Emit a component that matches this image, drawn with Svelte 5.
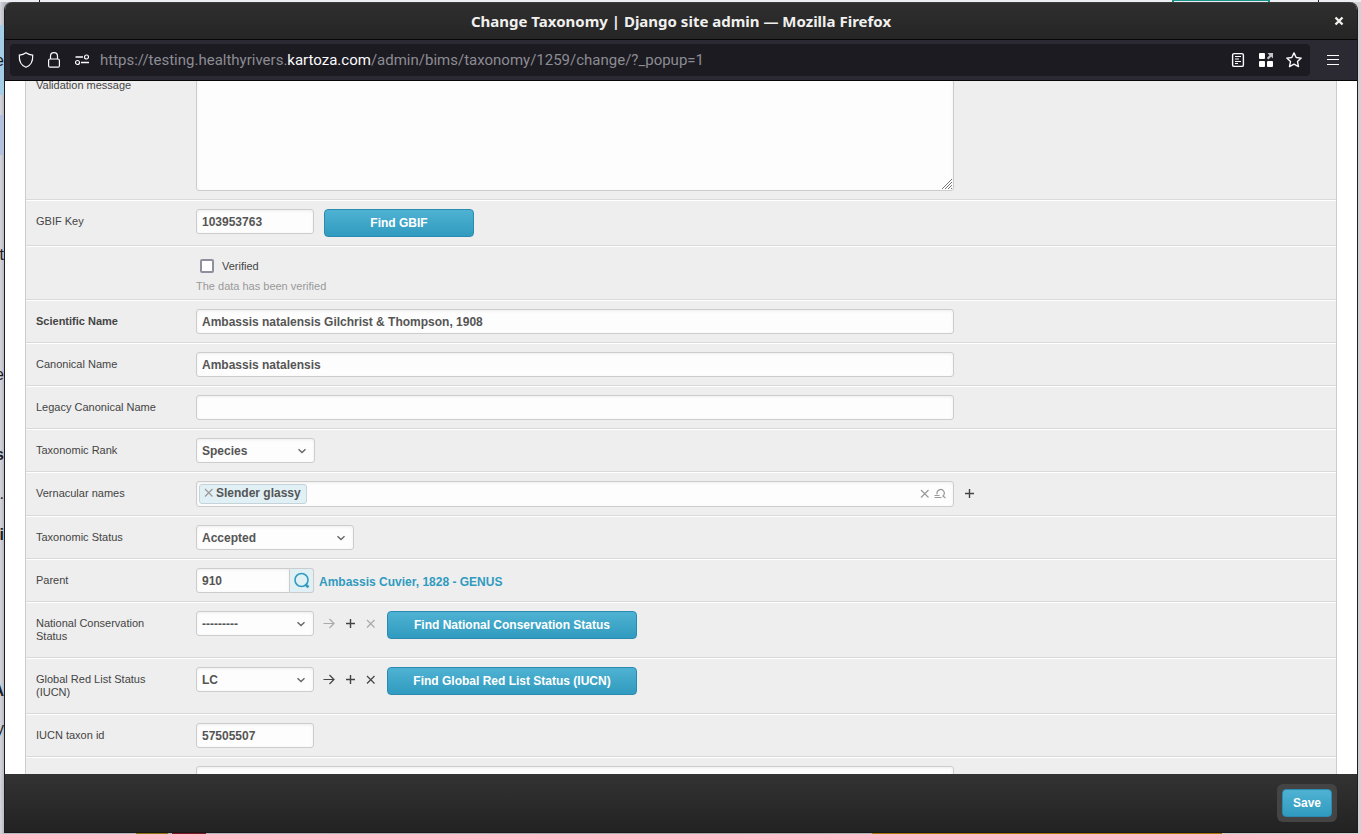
<script>
  let gbif = $state('103953763');
  let verified = $state(false);
  let scientific = $state('Ambassis natalensis Gilchrist & Thompson, 1908');
  let canonical = $state('Ambassis natalensis');
  let legacy = $state('');
  let parent = $state('910');
  let taxonId = $state('57505507');

  // Text of the page behind the popup that shows along the window's left side.
  const behind = [
    { t: 'e', y: 51 },
    { t: 't', y: 245 },
    { t: 'e', y: 365 },
    { t: 's', y: 445, b: true },
    { t: '.', y: 484 },
    { t: 'i', y: 525, b: true },
    { t: 'A', y: 681, b: true },
    { t: 'y', y: 719 }
  ];
</script>

{#snippet dropdown(id, value, width)}
  <span class="select" style="width: {width}px">
    <select {id}><option>{value}</option></select>
    <svg viewBox="0 0 10 10" width="10" height="10"><path d="M1.5 3.200 5 6.500 8.500 3.200" /></svg>
  </span>
{/snippet}

{#snippet arrow()}<svg viewBox="0 0 12 12" width="12" height="12"><path d="M.5 5.500h10.500M6.500 1 11 5.500 6.500 10" /></svg>{/snippet}
{#snippet plus()}<svg class="plus" viewBox="0 0 12 12" width="12" height="12"><path d="M6.500 1v9M2 5.500h9" /></svg>{/snippet}
{#snippet cross()}<svg viewBox="0 0 12 12" width="12" height="12"><path d="m2 2 7.500 7.500m0-7.500L2 9.500" /></svg>{/snippet}

<div class="desktop">
  <div class="patch blue"></div>
  <div class="patch lilac"></div>
  <div class="patch teal"></div>
  <div class="patch olive"></div>
  <div class="patch red"></div>
  <div class="patch gold"></div>
  <div class="patch tick start"></div>
  <div class="patch tick end"></div>
  {#each behind as g}
    <span class="glyph" class:bold={g.b} style="top: {g.y}px">{g.t}</span>
  {/each}

  <div class="window">
    <header class="titlebar">
      <h1>Change Taxonomy | Django site admin — Mozilla Firefox</h1>
      <button class="close" aria-label="Close window">
        <svg viewBox="0 0 10 10" width="10" height="10"><path d="m1.500 1.500 7 7m0-7-7 7" /></svg>
      </button>
    </header>

    <nav class="toolbar">
      <div class="urlbar">
        <button aria-label="Tracking protection">
          <svg viewBox="0 0 16 16" width="16" height="16"><path d="M8 .8c2 1.500 4.300 2.200 6.700 2.300C15 8.500 13 13.500 8 15.300 3 13.500 1 8.500 1.300 3.100 3.700 3 6 2.300 8 .8z" /></svg>
        </button>
        <button aria-label="Connection is secure">
          <svg viewBox="0 0 16 16" width="16" height="16"><path d="M4.500 7V4.200a3.500 3.500 0 0 1 7 0V7" /><rect x="2.600" y="7" width="10.800" height="8.200" rx="1.500" /></svg>
        </button>
        <button aria-label="Permissions">
          <svg viewBox="0 0 16 16" width="16" height="16"><path d="M1.500 5h7.500M7 10.500h8" stroke-width="1.400" /><circle cx="12.500" cy="5" r="2" /><circle cx="3.500" cy="10.500" r="2" /></svg>
        </button>
        <span class="url">https://testing.healthyrivers.<b>kartoza.com</b>/admin/bims/taxonomy/1259/change/?_popup=1</span>
        <button aria-label="Reader view">
          <svg viewBox="0 0 16 16" width="16" height="16"><rect x="2.600" y="1.600" width="10.800" height="12.800" rx="1.500" stroke-width="1.400" /><path d="M5 4.500h6M5 7h4M5 9.500h6M5 11.500h3" /></svg>
        </button>
        <button aria-label="Extensions">
          <svg class="tiles" viewBox="0 0 16 16" width="16" height="16"><rect x="1" y="1" width="6" height="6" rx="1" /><rect x="1" y="9" width="6" height="6" rx="1" /><rect x="9" y="9" width="6" height="6" rx="1" /><path d="M9.500 1H15v5.500l-1.800-1.800L10.400 7.500 8.800 6l2.700-2.800z" /></svg>
        </button>
        <button aria-label="Bookmark this page">
          <svg viewBox="0 0 16 16" width="16" height="16"><path d="m8 .9 2.200 4.600 5 .6-3.700 3.500 1 5L8 12.200l-4.500 2.400 1-5L.8 6.100l5-.6z" stroke-width="1.400" stroke-linejoin="round" /></svg>
        </button>
      </div>
      <button class="menu" aria-label="Open menu">
        <svg viewBox="0 0 12 12" width="12" height="12"><path d="M0 1.500h12M0 5.500h12M0 10.500h12" /></svg>
      </button>
    </nav>

    <main>
      <form onsubmit={(e) => e.preventDefault()}>
        <div class="row">
          <label for="message">Validation message</label>
          <textarea id="message"></textarea>
        </div>
        <div class="row">
          <label for="gbif">GBIF Key</label>
          <div class="field gap">
            <input id="gbif" class="short" type="text" bind:value={gbif} />
            <button type="button" class="action find">Find GBIF</button>
          </div>
        </div>
        <div class="row check-row">
          <div class="check">
            <label class="check-label"><input type="checkbox" bind:checked={verified} />Verified</label>
            <p>The data has been verified</p>
          </div>
        </div>
        <div class="row">
          <label for="scientific" class="required">Scientific Name</label>
          <input id="scientific" class="long" type="text" bind:value={scientific} />
        </div>
        <div class="row">
          <label for="canonical">Canonical Name</label>
          <input id="canonical" class="long" type="text" bind:value={canonical} />
        </div>
        <div class="row">
          <label for="legacy">Legacy Canonical Name</label>
          <input id="legacy" class="long" type="text" bind:value={legacy} />
        </div>
        <div class="row">
          <label for="rank">Taxonomic Rank</label>
          {@render dropdown('rank', 'Species', 119)}
        </div>
        <div class="row">
          <label for="vernacular">Vernacular names</label>
          <div class="field gap">
            <div class="tags">
              <span class="tag">
                <button type="button" aria-label="Remove Slender glassy">{@render cross()}</button>Slender glassy
              </span>
              <input id="vernacular" type="text" />
              <button type="button" aria-label="Clear">{@render cross()}</button>
              <button type="button" aria-label="Look up">
                <svg viewBox="0 0 12 12" width="12" height="12"><path d="M3.200 6.200A3.600 3.600 0 1 1 8.800 8M8.500 7.800l3 2.200M.5 7.500h5M.5 9.500h7" /></svg>
              </button>
            </div>
            <button type="button" class="icon" aria-label="Add vernacular name">{@render plus()}</button>
          </div>
        </div>
        <div class="row">
          <label for="status">Taxonomic Status</label>
          {@render dropdown('status', 'Accepted', 158)}
        </div>
        <div class="row">
          <label for="parent">Parent</label>
          <div class="field">
            <div class="lookup">
              <input id="parent" type="text" bind:value={parent} />
              <button type="button" aria-label="Look up parent">
                <svg viewBox="0 0 18 18" width="18" height="18"><circle cx="8.500" cy="8" r="6.500" /><path d="m12.200 12.200 3.300 3" stroke-width="2.800" /></svg>
              </button>
            </div>
            <a href="#parent">Ambassis Cuvier, 1828 - GENUS</a>
          </div>
        </div>
        <div class="row">
          <label for="national">National Conservation Status</label>
          <div class="field gap">
            {@render dropdown('national', '---------', 118)}
            <div class="tools">
              <button type="button" class="icon off" aria-label="View national status">{@render arrow()}</button>
              <button type="button" class="icon" aria-label="Add national status">{@render plus()}</button>
              <button type="button" class="icon off" aria-label="Delete national status">{@render cross()}</button>
            </div>
            <button type="button" class="action wide">Find National Conservation Status</button>
          </div>
        </div>
        <div class="row">
          <label for="iucn">Global Red List Status (IUCN)</label>
          <div class="field gap">
            {@render dropdown('iucn', 'LC', 118)}
            <div class="tools">
              <button type="button" class="icon" aria-label="View IUCN status">{@render arrow()}</button>
              <button type="button" class="icon" aria-label="Add IUCN status">{@render plus()}</button>
              <button type="button" class="icon" aria-label="Delete IUCN status">{@render cross()}</button>
            </div>
            <button type="button" class="action wide">Find Global Red List Status (IUCN)</button>
          </div>
        </div>
        <div class="row">
          <label for="taxon">IUCN taxon id</label>
          <input id="taxon" class="short" type="text" bind:value={taxonId} />
        </div>
        <div class="row">
          <label for="more"></label>
          <input id="more" class="long" type="text" />
        </div>
      </form>
    </main>

    <footer>
      <div class="save"><button type="button" class="action">Save</button></div>
    </footer>
  </div>
</div>

<style>
  :global(body) {
    margin: 0;
  }
  * {
    box-sizing: border-box;
  }
  .desktop {
    position: relative;
    display: flex;
    height: 100vh;
    padding: 2px 3px 1px 4px;
    overflow: hidden;
    background: linear-gradient(90deg, #d6d7de 0, #b9bac3 4px, #a9a9ae 50%, #d2d2d4 100%);
    font-family: 'Liberation Sans', Arial, sans-serif;
    font-size: 11px;
    color: #444;
  }
  .desktop::before {
    content: '';
    position: absolute;
    inset: 0 0 auto;
    height: 2px;
    background: #eceef1;
  }
  .patch {
    position: absolute;
  }
  .blue {
    top: 25px;
    left: 0;
    width: 4px;
    height: 70px;
    background: #a3cee6;
  }
  .lilac {
    top: 115px;
    left: 0;
    width: 4px;
    height: 40px;
    background: #b3c0de;
  }
  .teal {
    top: 0;
    right: 91px;
    width: 98px;
    height: 2px;
    border: solid #17948a;
    border-width: 1px 2px 0;
  }
  .olive,
  .red,
  .gold {
    bottom: 0;
    height: 1px;
  }
  .olive {
    left: 136px;
    width: 32px;
    background: #8a7210;
  }
  .red {
    left: 172px;
    width: 34px;
    background: #7d1522;
  }
  .gold {
    right: 139px;
    width: 350px;
    background: #a8770c;
  }
  .tick {
    top: 0;
    width: 1px;
    height: 2px;
    background: #222;
  }
  .start {
    left: 39px;
  }
  .end {
    right: 42px;
  }
  .glyph {
    position: absolute;
    left: 0;
    width: 4px;
    display: flex;
    justify-content: flex-end;
    overflow: hidden;
    font-size: 16px;
    line-height: 20px;
    color: #1c1d22;
  }
  .bold {
    font-weight: bold;
  }
  .window {
    position: relative;
    flex: 1;
    min-width: 0;
    display: flex;
    flex-direction: column;
    overflow: hidden;
    border: solid #1d1d22;
    border-width: 0 1px;
    border-radius: 8px 8px 0 0;
    background: #fff;
  }
  button {
    display: flex;
    align-items: center;
    justify-content: center;
    margin: 0;
    padding: 0;
    border: 0;
    background: none;
    color: inherit;
    font: inherit;
  }
  svg {
    flex: none;
    fill: none;
    stroke: currentColor;
    stroke-width: 1.2;
  }
  .titlebar {
    display: grid;
    grid-template-columns: 1fr auto 1fr;
    align-items: center;
    height: 38px;
    flex: none;
    border-top: 1px solid #3c3c3c;
    border-bottom: 1px solid #060606;
    background: linear-gradient(#2f2f2f, #252525);
    color: #f0f0ee;
  }
  h1 {
    grid-column: 2;
    margin: 0;
    padding-bottom: 1px;
    font: 700 15px/20px 'Noto Sans', sans-serif;
  }
  .close {
    justify-self: end;
    margin-right: 13px;
  }
  .close svg {
    stroke-width: 2.4;
  }
  .toolbar {
    display: flex;
    align-items: center;
    height: 41px;
    flex: none;
    padding: 0 18px 0 5px;
    border-bottom: 1px solid #060606;
    background: #2b2a33;
    color: #fbfbfe;
  }
  .urlbar {
    flex: 1;
    display: flex;
    align-items: center;
    gap: 12px;
    height: 32px;
    padding: 0 8px;
    border-radius: 4px;
    background: #1c1b22;
  }
  .url {
    flex: 1;
    margin-left: -2px;
    font: 15px/24px Roboto, 'Noto Sans', sans-serif;
    white-space: nowrap;
    color: #8c8c92;
  }
  .url b {
    font-weight: 400;
    color: #fbfbfe;
  }
  .tiles {
    fill: #fff;
    stroke: none;
  }
  .tiles path {
    fill: #c4c4c8;
  }
  .menu {
    margin-left: 17px;
  }
  main {
    flex: 1;
    min-height: 0;
    overflow: hidden;
    padding: 0 20px;
    background: #fff;
  }
  form {
    margin-top: -17px;
    border: solid #ccc;
    border-width: 0 1px;
    background: #eee;
  }
  .row {
    display: flex;
    align-items: flex-start;
    padding: 8px 10px;
    border-top: 1px solid #fff;
    border-bottom: 1px solid #d9d9d9;
  }
  .row > label {
    flex: none;
    width: 160px;
    padding: 6px 30px 6px 0;
    line-height: 13px;
  }
  .row > .required {
    font-weight: bold;
  }
  .field {
    display: flex;
    align-items: flex-start;
    gap: 5px;
  }
  .gap {
    gap: 10px;
  }
  input[type='text'],
  textarea,
  select {
    height: 25px;
    margin: 0;
    padding: 0 5px;
    border: 1px solid #ccc;
    border-radius: 3px;
    background: #fdfdfd;
    box-shadow: inset 0 1px 3px #eee;
    color: #555;
    font: bold 12px/15px 'Liberation Sans', Arial, sans-serif;
    outline: 0;
  }
  textarea {
    width: 758px;
    height: 118px;
  }
  textarea::-webkit-resizer {
    background: url("data:image/svg+xml,%3Csvg xmlns='http://www.w3.org/2000/svg' viewBox='0 0 15 15'%3E%3Cpath d='M4 14 14 4M7 14l7-7M10 14l4-4M13 14l1-1' stroke='%23777' fill='none'/%3E%3C/svg%3E");
  }
  input.long {
    width: 758px;
  }
  input.short {
    width: 118px;
  }
  .select {
    position: relative;
    display: block;
  }
  .select select {
    appearance: none;
    width: 100%;
    padding-top: 2px;
  }
  .select svg {
    position: absolute;
    top: 8px;
    right: 8px;
    color: #666;
    stroke-width: 1.4;
    pointer-events: none;
  }
  .action {
    height: 28px;
    padding: 0 10px;
    border: 1px solid #2b8ab0;
    border-radius: 4px;
    background: linear-gradient(#4fb2d3, #309bbf);
    color: #fff;
    font-size: 12px;
    font-weight: bold;
  }
  .find {
    width: 150px;
  }
  .wide {
    width: 250px;
  }
  .row.check-row {
    padding: 8px 10px 6px 170px;
  }
  .check-label {
    display: flex;
    align-items: center;
    gap: 8px;
    height: 22px;
  }
  .check-label input {
    appearance: none;
    width: 14px;
    height: 14px;
    margin: 0 0 0 4px;
    border: 2px solid #8f8f9d;
    border-radius: 2px;
    background: #fff;
  }
  .check-label input:checked {
    background: #309bbf;
  }
  .check p {
    margin: 3px 0 0;
    line-height: 13px;
    color: #999;
  }
  .tags {
    display: flex;
    align-items: center;
    gap: 3px;
    width: 758px;
    height: 26px;
    padding: 0 7px 0 2px;
    border: 1px solid #ccc;
    border-radius: 3px;
    background: #fdfdfd;
    box-shadow: inset 0 1px 3px #eee;
    color: #999;
  }
  .tags > input[type='text'] {
    flex: 1;
    min-width: 0;
    height: 20px;
    border: 0;
    background: none;
    box-shadow: none;
  }
  .tag {
    display: flex;
    align-items: center;
    gap: 1px;
    height: 20px;
    padding: 0 5px 2px 3px;
    border: 1px solid #c4d4da;
    border-radius: 3px;
    background: #e1f0f5;
    color: #555;
    font-size: 12px;
    font-weight: bold;
  }
  .tag button {
    color: #999;
  }
  .icon {
    width: 12px;
    height: 25px;
    margin-left: -1px;
    color: #444;
  }
  .plus {
    stroke-width: 1.4;
  }
  .off {
    color: #aaa;
  }
  .tools {
    display: flex;
    gap: 10px;
  }
  .lookup {
    display: flex;
  }
  .lookup input[type='text'] {
    width: 94px;
    border-radius: 3px 0 0 3px;
  }
  .lookup button {
    width: 24px;
    height: 25px;
    border: 1px solid #ccc;
    border-left: 0;
    border-radius: 0 3px 3px 0;
    background: #e1f0f5;
    color: #309bbf;
  }
  .lookup svg {
    stroke-width: 1.6;
  }
  a {
    padding-top: 7px;
    line-height: 15px;
    color: #309bbf;
    font-size: 12px;
    font-weight: bold;
    text-decoration: none;
  }
  footer {
    display: flex;
    justify-content: flex-end;
    flex: none;
    padding: 10px 20px;
    border-bottom: 1px solid #1a1a1a;
    background: linear-gradient(#333, #222);
  }
  .save {
    padding: 5px;
    border-radius: 6px;
    background: #444;
  }
</style>
